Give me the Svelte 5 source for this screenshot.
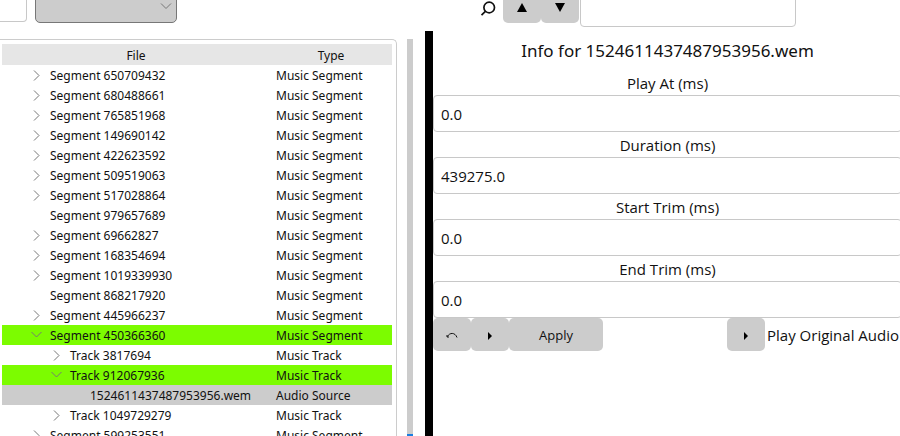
<script>
    let music = $state([
        { name: "Segment 650709432", children: [] },
        { name: "Segment 680488661", children: [] },
        { name: "Segment 765851968", children: [] },
        { name: "Segment 149690142", children: [] },
        { name: "Segment 422623592", children: [] },
        { name: "Segment 509519063", children: [] },
        { name: "Segment 517028864", children: [] },
        { name: "Segment 979657689" },
        { name: "Segment 69662827", children: [] },
        { name: "Segment 168354694", children: [] },
        { name: "Segment 1019339930", children: [] },
        { name: "Segment 868217920" },
        { name: "Segment 445966237", children: [] },
        {
            name: "Segment 450366360",
            open: true,
            modified: true,
            children: [
                { name: "Track 3817694", children: [] },
                {
                    name: "Track 912067936",
                    open: true,
                    modified: true,
                    children: [{ name: "1524611437487953956.wem" }],
                },
                { name: "Track 1049729279", children: [] },
            ],
        },
        { name: "Segment 599253551", children: [] },
    ])

    const types = ["Music Segment", "Music Track", "Audio Source"]

    let selected = $state("1524611437487953956.wem")

    let fields = $state([
        { id: "play-at", label: "Play At (ms)", value: "0.0" },
        { id: "duration", label: "Duration (ms)", value: "439275.0" },
        { id: "start-trim", label: "Start Trim (ms)", value: "0.0" },
        { id: "end-trim", label: "End Trim (ms)", value: "0.0" },
    ])

    function flatten(nodes, level = 0) {
        return nodes.flatMap((node) => [
            { node, level },
            ...(node.open ? flatten(node.children, level + 1) : []),
        ])
    }

    let rows = $derived(flatten(music))

    function toggle(e, node) {
        e.stopPropagation()
        node.open = !node.open
    }
</script>

<div class="app">
    <header class="toolbar">
        <div class="left-tools">
            <input class="filter" type="text" aria-label="Filter" />
            <div class="picker">
                <select aria-label="Filter type">
                    <option></option>
                </select>
                <svg class="arrow" viewBox="0 0 12 8" width="12" height="8">
                    <path d="M1 1.5 L6 6.5 L11 1.5" />
                </svg>
            </div>
        </div>
        <div class="right-tools">
            <svg class="search-icon" viewBox="0 0 16 16" width="16" height="16">
                <circle cx="9.2" cy="6.5" r="5.3" />
                <path d="M5.4 10.3 L1.5 14.2" />
            </svg>
            <button class="small" aria-label="Previous result">
                <svg viewBox="0 0 10 9" width="10" height="9"><path d="M5 0 L10 9 H0 Z" /></svg>
            </button>
            <button class="small" aria-label="Next result">
                <svg viewBox="0 0 10 9" width="10" height="9"><path d="M0 0 H10 L5 9 Z" /></svg>
            </button>
            <input class="search" type="text" aria-label="Search" />
        </div>
    </header>

    <main>
        <section class="files">
            <div class="tree">
                <table>
                    <thead>
                        <tr><th class="file">File</th><th>Type</th></tr>
                    </thead>
                    <tbody>
                        {#each rows as { node, level } (node.name)}
                            <tr
                                class:modified={node.modified}
                                class:selected={node.name === selected}
                                onclick={() => (selected = node.name)}
                            >
                                <td>
                                    <div class="cell level-{level}">
                                        {#if node.children}
                                            <button class="toggle" aria-label="Toggle {node.name}" onclick={(e) => toggle(e, node)}>
                                                <svg viewBox="0 0 12 12" width="12" height="12">
                                                    {#if node.open}
                                                        <path d="M1.5 2 L6.5 7 L11.5 2" />
                                                    {:else}
                                                        <path d="M4 0.5 L9 5.5 L4 10.5" />
                                                    {/if}
                                                </svg>
                                            </button>
                                        {:else}
                                            <span class="toggle"></span>
                                        {/if}
                                        {node.name}
                                    </div>
                                </td>
                                <td>{types[level]}</td>
                            </tr>
                        {/each}
                    </tbody>
                </table>
            </div>
            <div class="track"><div class="thumb"></div></div>
        </section>

        <section class="info">
            <h1>Info for {selected}</h1>
            {#each fields as field (field.id)}
                <label for={field.id}>{field.label}</label>
                <input id={field.id} type="text" bind:value={field.value} />
            {/each}
            <div class="actions">
                <button class="small" aria-label="Revert">
                    <svg class="revert" viewBox="0 0 12 8" width="12" height="8">
                        <path d="M1.5 4.5 C3.5 0.5 9 0 11 5.5" />
                        <path d="M1 3 V5 H3" />
                    </svg>
                </button>
                <button class="small" aria-label="Play">
                    <svg viewBox="0 0 4 8" width="4" height="8"><path d="M0 0 L4 4 L0 8 Z" /></svg>
                </button>
                <button class="apply">Apply</button>
                <button class="small original" id="play-original">
                    <svg viewBox="0 0 4 8" width="4" height="8"><path d="M0 0 L4 4 L0 8 Z" /></svg>
                </button>
                <label for="play-original">Play Original Audio</label>
            </div>
        </section>
    </main>
</div>

<style>
    :global(body) {
        margin: 0;
        background: #fff;
    }

    .app {
        display: flex;
        flex-direction: column;
        height: 100vh;
        overflow: hidden;
        color: #111;
        font-family: "Segoe UI", "Open Sans", sans-serif;
        font-size: 15px;
    }

    input,
    select,
    button {
        box-sizing: border-box;
        margin: 0;
        font-family: inherit;
        color: inherit;
    }

    input {
        height: 37px;
        padding: 0 7px;
        border: 1px solid #c8c8c8;
        border-radius: 4px;
        background: #fff;
        font-size: 15px;
    }

    button {
        display: flex;
        align-items: center;
        justify-content: center;
        height: 33px;
        padding: 0;
        border: none;
        border-radius: 5px;
        background: #ccc;
        font-size: 13px;
    }

    .small {
        flex: none;
        width: 38px;
    }

    /* the first row is scrolled partly out of view */
    .toolbar {
        display: flex;
        flex: none;
        height: 41px;
        margin-top: -10px;
    }

    .left-tools {
        display: flex;
        flex: none;
        gap: 8px;
        width: 425px;
    }

    .filter {
        width: 27px;
        height: 32px;
        border-left: none;
        border-radius: 0 4px 4px 0;
    }

    .picker {
        position: relative;
        width: 142px;
        height: 33px;
    }

    select {
        appearance: none;
        width: 100%;
        height: 33px;
        border: 1px solid #777;
        border-radius: 5px;
        background: #ccc;
    }

    .arrow {
        position: absolute;
        right: 5px;
        top: 12px;
        fill: none;
        stroke: #777;
        pointer-events: none;
    }

    .right-tools {
        display: flex;
        flex: 1;
        padding-left: 55px;
    }

    .search-icon {
        margin: 11px 7px 0 0;
        fill: none;
        stroke: #111;
        stroke-width: 1.7;
    }

    .toolbar .small {
        padding-top: 2px;
    }

    .search {
        width: 216px;
        margin-left: 1px;
    }

    main {
        display: flex;
        flex: 1;
        min-height: 0;
    }

    .files {
        display: flex;
        box-sizing: border-box;
        flex: none;
        width: 425px;
        padding-top: 8px;
    }

    .tree {
        box-sizing: border-box;
        width: 397px;
        padding: 4px 4px 0 2px;
        overflow: hidden;
        border: 1px solid #ccc;
        border-width: 1px 1px 0 0;
        border-radius: 0 5px 0 0;
    }

    table {
        width: 100%;
        table-layout: fixed;
        border-collapse: collapse;
        font-family: "Segoe UI", "Noto Sans", sans-serif;
        font-size: 12px;
        line-height: 18px;
    }

    th {
        padding: 3px 0 0;
        background: #e6e6e6;
        font-weight: normal;
    }

    .file {
        width: 268px;
    }

    td {
        padding: 2px 0 0;
        white-space: nowrap;
    }

    td + td {
        padding-left: 6px;
    }

    .modified {
        background: #7cfc00;
    }

    .selected {
        background: #ccc;
    }

    .cell {
        display: flex;
        align-items: center;
        height: 18px;
        padding-left: 28px;
    }

    .level-1 {
        padding-left: 48px;
    }

    .level-2 {
        padding-left: 68px;
    }

    .toggle {
        flex: none;
        justify-content: flex-start;
        width: 20px;
        height: 18px;
        background: none;
    }

    .toggle svg {
        fill: none;
        stroke: #777;
    }

    .track {
        width: 6px;
        margin-left: 10px;
        background: #ccc;
    }

    .thumb {
        height: 100%;
        margin-top: 395px;
        background: #1a7fe0;
    }

    .info {
        display: flex;
        flex: 1;
        flex-direction: column;
        min-width: 0;
        margin-right: -2px;
        border-left: 8px solid #000;
    }

    h1 {
        margin: 0;
        font-family: "Segoe UI", "Noto Sans", sans-serif;
        font-size: 17px;
        font-weight: normal;
        line-height: 39px;
        text-align: center;
    }

    label {
        padding-top: 2px;
        line-height: 23px;
        text-align: center;
    }

    .info input {
        flex: none;
        width: 100%;
    }

    .actions {
        display: flex;
        align-items: center;
        padding-right: 3px;
        white-space: nowrap;
    }

    .apply {
        width: 94px;
    }

    .original {
        margin: 0 2px 0 auto;
    }

    .actions svg {
        margin-top: 2px;
    }

    .revert {
        fill: none;
        stroke: #111;
    }
</style>
